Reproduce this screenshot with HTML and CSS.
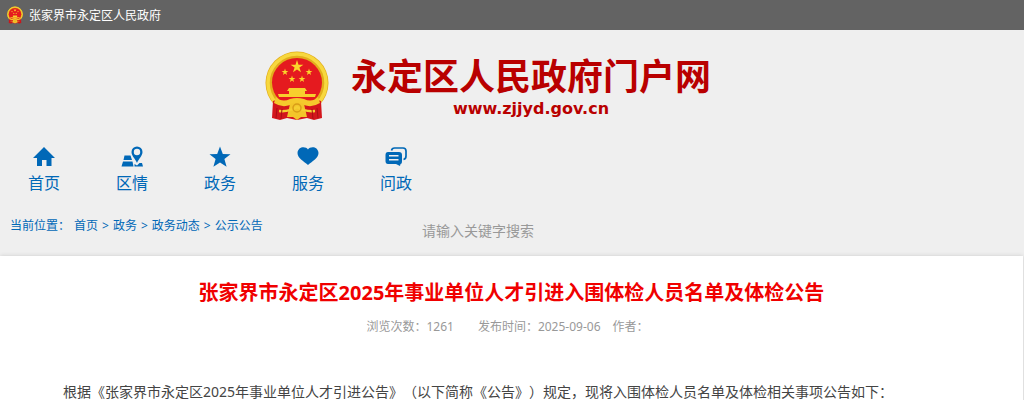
FILE: index.html
```html
<!DOCTYPE html>
<html lang="zh-CN">
<head>
  <meta charset="UTF-8">
  <meta name="viewport" content="width=device-width, initial-scale=1.0">
  <title>张家界市永定区2025年事业单位人才引进入围体检人员名单及体检公告</title>
  <link rel="stylesheet" href="styles.css">
</head>
<body>
  <!-- national emblem, used in the top bar and in the header -->
  <svg class="defs" width="0" height="0" aria-hidden="true">
    <symbol id="emblem" viewBox="0 0 64 70">
      <ellipse cx="32" cy="32" rx="31.500" ry="31.500" fill="#e3ad1c"/>
      <ellipse cx="32" cy="32" rx="29" ry="29" fill="none" stroke="#f7d83e" stroke-width="3.500"/>
      <path d="M8 50 Q18 46 26 54 H38 Q46 46 56 50 L57 67 L49 69 L42 67 L32 69 L22 67 L15 69 L7 67 Z" fill="#d3161c"/>
      <ellipse cx="32" cy="31.500" rx="25" ry="24.500" fill="#e51a1f"/>
      <path d="M32 9 L33.500 13.700 H38.400 L34.400 16.600 L36 21.300 L32 18.400 L28 21.300 L29.600 16.600 L25.600 13.700 H30.500 Z" fill="#fbd52b"/>
      <g fill="#fbd52b">
        <path id="small-star" d="M20 17.500 L20.800 20 H23.400 L21.300 21.500 L22.100 24 L20 22.500 L17.900 24 L18.700 21.500 L16.600 20 H19.200 Z"/>
        <use href="#small-star" x="24"/>
        <use href="#small-star" x="7" y="7"/>
        <use href="#small-star" x="17" y="7"/>
      </g>
      <path d="M24 37 H40 L42 40 H22 Z M24 40 H40 V43 H51 L50 46 H14 L13 43 H24 Z" fill="#f8cf2d"/>
      <path d="M11 46 Q17 52 25 48 Q32 46 39 48 Q47 52 53 46 L55 52 Q47 57 39 54 Q32 51 25 54 Q17 57 9 52 Z" fill="#f5c92c"/>
      <path d="M25 53 Q32 50 39 53 L42 66 L36 66 L32 69 L28 66 L22 66 Z" fill="#f3c52a"/>
      <path d="M14 60 Q24 61 32 56 Q40 61 50 60" fill="none" stroke="#f6cf32" stroke-width="2.500"/>
      <circle cx="32" cy="57" r="4" fill="none" stroke="#d99d18" stroke-width="1.500"/>
      <path d="M12 57 L11 67 M17 58 L16 68 M52 57 L53 67 M47 58 L48 68" stroke="#a80f14"/>
    </symbol>
  </svg>

  <div class="topbar">
    <svg class="topbar-emblem" aria-hidden="true"><use href="#emblem"/></svg>
    <span>张家界市永定区人民政府</span>
  </div>

  <header class="header">
    <svg class="logo-emblem" aria-hidden="true"><use href="#emblem"/></svg>
    <div class="logo-text">
      <div class="site-name">永定区人民政府门户网</div>
      <div class="site-url">www.zjjyd.gov.cn</div>
    </div>
  </header>

  <nav class="nav">
    <a href="#">
      <svg viewBox="0 0 22 22"><path d="M11 1 L22 12 H18.500 V20 H13.500 V14 H9 V20 H4 V12 H0 Z"/></svg>
      首页
    </a>
    <a href="#">
      <svg viewBox="0 0 22 22"><path d="M3.500 9.500 H9.500 L11 14 H2.500 Z M2 15.500 H11.500 L12.500 20.500 H0.500 Z M13.500 18 L16 19.500 L18.500 17 H21 L22 20.500 H13.500 Z"/><path fill-rule="evenodd" d="M16 0.500 A5.500 5.500 0 0 1 21.500 6 C21.500 10 17.500 13 16 17 C14.500 13 10.500 10 10.500 6 A5.500 5.500 0 0 1 16 0.500 Z M16 2.800 A3.200 3.200 0 1 0 16 9.200 A3.200 3.200 0 1 0 16 2.800 Z"/></svg>
      区情
    </a>
    <a href="#">
      <svg viewBox="0 0 22 22"><path d="M11 0.500 L13.800 8 L21.500 8.200 L15.400 13 L17.600 20.800 L11 16.400 L4.400 20.800 L6.600 13 L0.500 8.200 L8.200 8 Z"/></svg>
      政务
    </a>
    <a href="#">
      <svg viewBox="0 0 22 22"><path d="M11 3.500 C13 0 21 0 21.500 7 C21.500 12 15.500 15 11 19 C6.500 15 0.500 12 0.500 7 C1 0 9 0 11 3.500 Z"/></svg>
      服务
    </a>
    <a href="#">
      <svg viewBox="0 0 22 22"><path d="M6.500 4.500 Q7 2 9.500 2 H18 Q21 2 21 5 V10 Q21 13 18.500 13.500" fill="none" stroke="currentColor" stroke-width="1.700"/><path fill-rule="evenodd" d="M3 6 H14 Q17 6 17 9 V15 Q17 18 15.500 18 L15 20 L11 18 H3 Q0.500 18 0.500 15 V9 Q0.500 6 3 6 Z M4 9 V10.500 H13.500 V9 Z M4 13 V14.500 H13.500 V13 Z"/></svg>
      问政
    </a>
  </nav>

  <div class="subbar">
    <div class="breadcrumb">
      <span>当前位置：</span>
      <a href="#">首页</a>
      <span>&gt;</span>
      <a href="#">政务</a>
      <span>&gt;</span>
      <a href="#">政务动态</a>
      <span>&gt;</span>
      <a href="#">公示公告</a>
    </div>
    <form class="search">
      <input type="text" placeholder="请输入关键字搜索" aria-label="请输入关键字搜索">
    </form>
  </div>

  <main class="article">
    <h1>张家界市永定区2025年事业单位人才引进入围体检人员名单及体检公告</h1>
    <div class="meta">
      <span class="views">浏览次数：1261</span>
      <span class="date">发布时间：2025-09-06</span>
      <span>作者：</span>
    </div>
    <div class="content">
      <p>根据《张家界市永定区2025年事业单位人才引进公告》（以下简称《公告》）规定，现将入围体检人员名单及体检相关事项公告如下：</p>
    </div>
  </main>
</body>
</html>
```
FILE: styles.css
```css
* {
  box-sizing: border-box;
}
body {
  margin: 0;
  background: #efefef;
  font-family: "Noto Sans", "Noto Sans CJK SC", sans-serif;
  font-size: 12px;
  color: #444;
  text-spacing-trim: space-all;
}
a {
  color: #0068b7;
  text-decoration: none;
}
.defs {
  display: block;
}

/* top bar */
.topbar {
  display: flex;
  align-items: center;
  gap: 6px;
  height: 30px;
  padding: 0 7px;
  background: #636363;
  color: #fff;
}
.topbar-emblem {
  width: 16px;
  height: 18px;
}

/* header */
.header {
  display: flex;
  justify-content: center;
  gap: 22px;
  padding: 21px 48px 0 0;
}
.logo-emblem {
  width: 64px;
  height: 70px;
}
.logo-text {
  padding-top: 4px;
  color: #b90000;
  font-weight: bold;
  text-align: center;
}
.site-name {
  font-size: 36px;
  line-height: 44px;
}
.site-url {
  font-family: "DejaVu Sans", sans-serif;
  font-size: 16px;
  line-height: 20px;
}

/* main navigation */
.nav {
  display: flex;
  padding-top: 25px;
}
.nav a {
  display: flex;
  flex-direction: column;
  align-items: center;
  width: 88px;
  font-size: 16px;
  line-height: 30px;
}
.nav svg {
  width: 22px;
  height: 22px;
  fill: currentColor;
}

/* breadcrumb and search */
.subbar {
  display: flex;
  padding: 12px 10px 0;
  height: 58px;
}
.breadcrumb {
  display: flex;
  gap: 4px;
  width: 412px;
  line-height: 32px;
  color: #0068b7;
}
.search input {
  width: 240px;
  height: 40px;
  padding: 0;
  border: 0;
  outline: 0;
  background: transparent;
  font-family: inherit;
  font-size: 14px;
}
.search input::placeholder {
  color: #999;
}

/* article */
.article {
  margin-right: 1px;
  padding: 20px 35px 0;
  background: #fff;
  box-shadow: 0 0 4px #ccc;
}
.article h1 {
  margin: 0;
  color: #f00000;
  font-size: 20px;
  line-height: 34px;
  text-align: center;
}
.meta {
  display: flex;
  justify-content: center;
  margin-top: 6px;
  padding-right: 8px;
  line-height: 22px;
  color: #999;
}
.views {
  margin-right: 24px;
}
.date {
  margin-right: 12px;
}
.content {
  margin-top: 40px;
  font-size: 14px;
  line-height: 28px;
}
.content p {
  margin: 0;
  text-indent: 2em;
}
```
